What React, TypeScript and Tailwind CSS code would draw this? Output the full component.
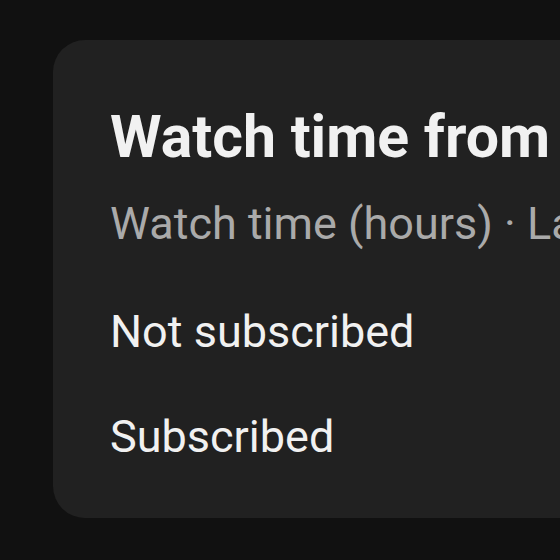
export default function App() {
  return (
    <div className="w-[560px] h-[560px] overflow-hidden bg-[#111111] pt-[40px] pl-[53px] font-['Roboto',_'Liberation_Sans',_sans-serif]">
      <div className="w-[620px] h-[478px] rounded-[32px] bg-[#212121] pl-[57px] pt-[67px]">
        <h2 className="text-[59px] leading-[60px] font-bold text-[#f1f1f1] whitespace-nowrap">
          Watch time from subscribers
        </h2>
        <p className="mt-[34px] text-[45px] leading-[45px] text-[#aaaaaa] whitespace-nowrap">
          Watch time (hours) · Last 28 days
        </p>
        <div className="mt-[63px] text-[45px] leading-[45px] text-[#f1f1f1] whitespace-nowrap">
          Not subscribed
        </div>
        <div className="mt-[60px] text-[45px] leading-[45px] text-[#f1f1f1] whitespace-nowrap">
          Subscribed
        </div>
      </div>
    </div>
  );
}
